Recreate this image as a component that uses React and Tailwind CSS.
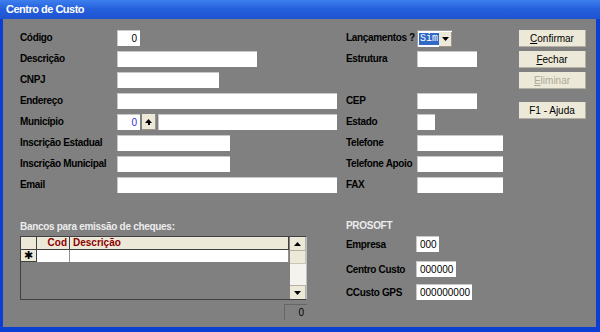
import React from 'react';

const font = { fontFamily: '"Liberation Sans", Arial, sans-serif' };

const Input = ({ w, value, color = 'text-black', className = '' }) => (
  <div
    className={`h-[16px] bg-white border-t border-l border-[#c8c8c8] flex items-center justify-end px-[3px] text-[10px] ${color} ${className}`}
    style={{ width: w }}
  >
    {value}
  </div>
);

const Row = ({ label, labelW, children }) => (
  <div className="h-[21px] flex items-start">
    <div
      className="h-[16px] leading-[16px] text-[10px] font-bold tracking-[-0.35px] text-black whitespace-nowrap"
      style={{ width: labelW }}
    >
      {label}
    </div>
    {children}
  </div>
);

const Btn = ({ children, disabled, className = '' }) => (
  <div
    className={`w-[67px] h-[17px] bg-[#ece9d8] border-b border-r border-[#b5b2a5] flex items-center justify-center text-[10px] ${
      disabled ? 'text-[#aca899]' : 'text-black'
    } ${className}`}
  >
    {children}
  </div>
);

const Tri = ({ up }) => (
  <svg width="7" height="4" viewBox="0 0 7 4">
    <path d={up ? 'M0 4 L3.5 0 L7 4 Z' : 'M0 0 L7 0 L3.5 4 Z'} fill="#000" />
  </svg>
);

const SmallLabel = ({ children }) => (
  <div className="w-[70px] text-[10px] font-bold tracking-[-0.35px] text-black whitespace-nowrap">{children}</div>
);

export default function App() {
  return (
    <div className="w-[600px] h-[332px] flex flex-col bg-[#0a3fd2]" style={font}>
      {/* title bar */}
      <div className="h-[19px] flex items-center pl-[6px] bg-gradient-to-b from-[#3d7fee] via-[#245edb] to-[#1f54d0] text-white text-[11px] font-bold tracking-[-0.5px]">
        Centro de Custo
      </div>

      <div className="flex-1 bg-[#808080] border-l-[3px] border-r-[4px] border-b-[5px] border-[#0b3fd4] pl-[17px] pt-[11px] flex flex-col">
        {/* campos */}
        <div className="flex">
          <div className="w-[317px] flex flex-col">
            <Row label="Código" labelW={97}><Input w={23} value="0" /></Row>
            <Row label="Descrição" labelW={97}><Input w={140} /></Row>
            <Row label="CNPJ" labelW={97}><Input w={102} /></Row>
            <Row label="Endereço" labelW={97}><Input w={220} /></Row>
            <Row label="Município" labelW={97}>
              <Input w={23} value="0" color="text-[#3030d0]" />
              <div className="w-[14px] h-[16px] ml-[2px] bg-[#ece9d8] border-b border-r border-[#9a978a] flex flex-col items-center justify-center">
                <Tri up />
                <div className="w-[2px] h-[2px] bg-black" />
              </div>
              <Input w={179} className="ml-[2px]" />
            </Row>
            <Row label="Inscrição Estadual" labelW={97}><Input w={113} /></Row>
            <Row label="Inscrição Municipal" labelW={97}><Input w={113} /></Row>
            <Row label="Email" labelW={97}><Input w={220} /></Row>
          </div>

          <div className="w-[157px] ml-[9px] flex flex-col">
            <Row label="Lançamentos ?" labelW={71}>
              <div className="w-[35px] h-[17px] bg-white border-t border-l border-[#a0a0a0] flex items-center pl-[1px]">
                <span
                  className="h-[12px] leading-[12px] px-[1px] bg-[#316ac5] text-white text-[10px]"
                  style={{ fontFamily: '"Liberation Mono", monospace' }}
                >
                  Sim
                </span>
                <div className="ml-auto w-[13px] h-[15px] bg-[#ece9d8] border-b border-r border-[#9a978a] flex items-center justify-center">
                  <Tri />
                </div>
              </div>
            </Row>
            <Row label="Estrutura" labelW={71}><Input w={60} /></Row>
            <div className="h-[21px]" />
            <Row label="CEP" labelW={71}><Input w={60} /></Row>
            <Row label="Estado" labelW={71}><Input w={18} /></Row>
            <Row label="Telefone" labelW={71}><Input w={86} /></Row>
            <Row label="Telefone Apoio" labelW={71}><Input w={86} /></Row>
            <Row label="FAX" labelW={71}><Input w={86} /></Row>
          </div>

          <div className="ml-[16px] flex flex-col">
            <Btn><span><u>C</u>onfirmar</span></Btn>
            <Btn className="mt-[4px]"><span><u>F</u>echar</span></Btn>
            <Btn disabled className="mt-[4px]"><span><u>E</u>liminar</span></Btn>
            <Btn className="mt-[13px]">F1 - Ajuda</Btn>
          </div>
        </div>

        {/* bancos / prosoft */}
        <div className="flex mt-[23px]">
          <div className="w-[287px] flex flex-col">
            <div className="h-[12px] leading-[12px] text-[10px] font-bold tracking-[-0.3px] text-[#ececec]">
              Bancos para emissão de cheques:
            </div>
            <div className="mt-[3px] h-[64px] border border-[#404040] border-r-[#c0c0c0] flex">
              <div className="flex-1 flex flex-col">
                <div className="h-[13px] flex bg-[#ece9d8] border-b border-[#404040] text-[10px] font-bold text-[#8b0000] leading-[12px]">
                  <div className="w-[16px] border-r border-[#404040]" />
                  <div className="w-[33px] border-r border-[#404040] text-right pr-[2px]">Cod</div>
                  <div className="flex-1 border-r border-[#404040] pl-[3px]">Descrição</div>
                </div>
                <div className="h-[12px] flex">
                  <div className="w-[16px] bg-[#ece9d8] border-r border-b border-[#404040] flex items-center justify-center text-[11px] leading-[11px] text-black">
                    ✱
                  </div>
                  <div className="w-[33px] bg-white border-r border-[#909090]" />
                  <div className="flex-1 bg-white border-r border-[#909090]" />
                </div>
              </div>
              <div className="w-[16px] ml-[1px] flex flex-col bg-[#f4f3ee]">
                <div className="h-[14px] bg-[#ece9d8] border-b border-r border-[#b5b2a5] flex items-center justify-center"><Tri up /></div>
                <div className="h-[13px] bg-[#ece9d8] border-b border-r border-[#c9c6b8]" />
                <div className="flex-1" />
                <div className="h-[14px] bg-[#ece9d8] border-t border-r border-[#b5b2a5] flex items-center justify-center"><Tri /></div>
              </div>
            </div>
            <div className="mt-[4px] self-end w-[23px] h-[16px] border-t border-l border-[#666] border-b-white border-r-white flex items-center justify-end pr-[3px] text-[10px] text-black">
              0
            </div>
          </div>

          <div className="ml-[39px] flex flex-col">
            <div className="h-[12px] leading-[12px] text-[10px] font-bold tracking-[-0.3px] text-[#ececec] -mt-[1px]">PROSOFT</div>
            <div className="mt-[4px] flex items-center h-[16px]">
              <SmallLabel>Empresa</SmallLabel>
              <Input w={23} value="000" className="justify-start" />
            </div>
            <div className="mt-[9px] flex items-center h-[16px]">
              <SmallLabel>Centro Custo</SmallLabel>
              <Input w={40} value="000000" className="justify-start" />
            </div>
            <div className="mt-[7px] flex items-center h-[16px]">
              <SmallLabel>CCusto GPS</SmallLabel>
              <Input w={56} value="000000000" className="justify-start" />
            </div>
          </div>
        </div>
      </div>
    </div>
  );
}
